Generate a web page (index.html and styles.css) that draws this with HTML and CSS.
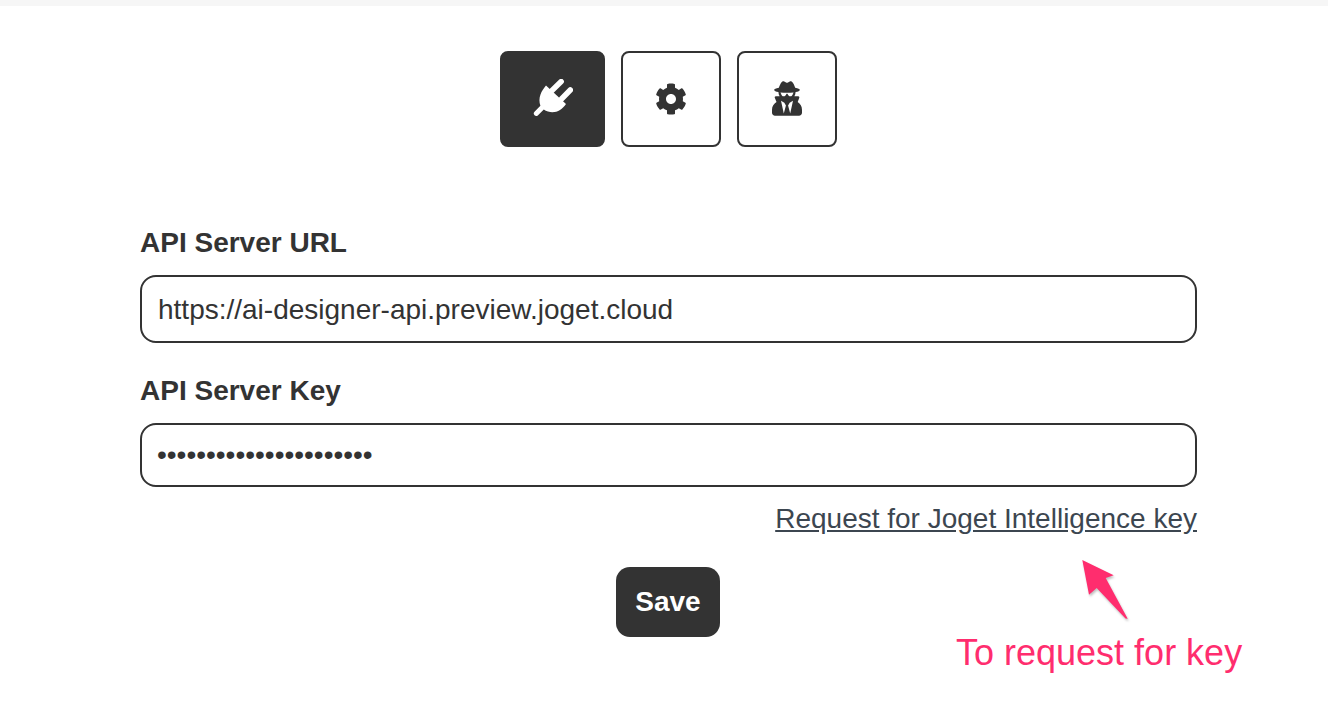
FILE: index.html
```html
<!DOCTYPE html>
<html lang="en">
<head>
<meta charset="utf-8">
<title>API Server Settings</title>
<link rel="stylesheet" href="styles.css">
</head>
<body>
<div class="top-strip"></div>
<main class="panel">
  <nav class="tabs">
    <button class="tab tab-wide tab-active" type="button" aria-label="Connection">
      <svg class="icon-plug" viewBox="0 0 40 40"><path fill="currentColor" d="M13 6.500L33 25C29 31 22 35 15 32.500C13.500 32 12 31.300 10.800 30.400L4.800 36.400A2.500 2.500 0 0 1 1.300 32.900L7.400 26.800C6 23 6.200 19 7.500 15.500C8.500 12 11 9 13 6.500Z"/><path class="plug-prong" d="M19 11.500L28.200 2.600M28.500 20L37.300 11"/></svg>
    </button>
    <button class="tab" type="button" aria-label="Settings">
      <svg class="icon-cog" viewBox="0 0 512 512"><path fill="currentColor" d="M487.4 315.7l-42.6-24.6c4.300-23.200 4.300-47 0-70.200l42.600-24.600c4.900-2.800 7.100-8.600 5.500-14-11.100-35.600-30-67.800-54.700-94.600-3.800-4.100-10-5.100-14.800-2.300L380.800 110c-17.900-15.400-38.500-27.300-60.800-35.100V25.800c0-5.600-3.900-10.500-9.400-11.700-36.700-8.200-74.300-7.800-109.200 0-5.500 1.200-9.400 6.100-9.400 11.700V75c-22.200 7.900-42.800 19.800-60.800 35.100L88.700 85.500c-4.900-2.800-11-1.900-14.800 2.300-24.700 26.700-43.600 58.900-54.700 94.600-1.700 5.400.6 11.200 5.500 14L67.300 221c-4.300 23.200-4.300 47 0 70.200l-42.600 24.600c-4.900 2.800-7.100 8.600-5.500 14 11.100 35.600 30 67.800 54.700 94.600 3.800 4.100 10 5.100 14.800 2.300l42.600-24.600c17.900 15.400 38.500 27.300 60.800 35.100v49.200c0 5.600 3.900 10.500 9.400 11.700 36.700 8.200 74.300 7.800 109.200 0 5.500-1.200 9.400-6.100 9.400-11.700v-49.200c22.200-7.900 42.800-19.800 60.800-35.100l42.600 24.600c4.900 2.800 11 1.900 14.800-2.300 24.700-26.700 43.600-58.900 54.700-94.600 1.500-5.500-.7-11.300-5.600-14.100zM256 336c-44.100 0-80-35.900-80-80s35.900-80 80-80 80 35.900 80 80-35.900 80-80 80z"/></svg>
    </button>
    <button class="tab" type="button" aria-label="Privacy">
      <svg class="icon-secret" viewBox="0 0 448 512"><path fill="currentColor" d="M383.900 308.300l23.900-62.600c4-10.500-3.700-21.700-15-21.700h-58.500c11-18.900 17.800-40.600 17.800-64v-.3c39.200-7.800 64-19.100 64-31.700 0-13.300-27.300-25.100-70.100-33-9.200-32.800-27-65.800-40.600-82.800-9.500-11.900-25.900-15.600-39.500-8.800l-27.600 13.800c-9 4.500-19.600 4.500-28.600 0L182.100 3.400c-13.600-6.800-30-3.100-39.500 8.800-13.500 17-31.400 50-40.600 82.800-42.700 7.900-70 19.700-70 33 0 12.600 24.800 23.900 64 31.700v.3c0 23.400 6.800 45.100 17.800 64H56.300c-11.500 0-19.200 11.700-14.700 22.300l25.800 60.200C27.300 329.800 0 372.700 0 422.400v44.800C0 491.900 20.100 512 44.800 512h358.400c24.700 0 44.800-20.100 44.800-44.800v-44.800c0-48.400-25.800-90.400-64.100-114.100zM176 480l-41.600-192 49.600 32 24 40-32 120zm96 0l-32-120 24-40 49.600-32L272 480zm41.700-298.500c-3.900 11.900-7 24.600-16.500 33.400-10.100 9.300-48 22.400-64-25-2.800-8.400-15.400-8.400-18.300 0-17 50.200-56 32.400-64 25-9.500-8.800-12.700-21.500-16.500-33.400-.8-2.500-6.300-5.700-6.300-5.800v-10.800c28.300 3.600 61 5.800 96 5.800s67.700-2.100 96-5.800v10.800c-.1.100-5.600 3.200-6.400 5.800z"/></svg>
    </button>
  </nav>
  <form class="form">
    <label class="label label-url" for="url">API Server URL</label>
    <input class="field field-url" id="url" type="text" value="https://ai-designer-api.preview.joget.cloud">
    <label class="label label-key" for="key">API Server Key</label>
    <input class="field field-key" id="key" type="password" value="abcdefghijklmnopqrstuv">
    <div class="link-row"><a class="key-link" href="#">Request for Joget Intelligence key</a></div>
    <div class="actions"><button class="save" type="button">Save</button></div>
  </form>
</main>
<svg class="callout-arrow" viewBox="0 0 60 70"><polygon fill="#ff2d6e" points="2.300,2 33.700,17.300 25.700,20 47.700,60.700 45.500,60.500 16.700,30 9,36.700"/></svg>
<div class="callout-text">To request for key</div>
</body>
</html>
```

FILE: styles.css
```css
* { box-sizing: border-box; }
html, body { margin: 0; padding: 0; }
body {
  position: relative;
  height: 718px;
  overflow: hidden;
  background: #fff;
  color: #333;
  font-family: "Liberation Sans", Arial, sans-serif;
}
.top-strip { height: 6px; background: #f6f6f6; }
.panel { padding: 45px 131px 0 140px; }
.tabs { display: flex; justify-content: center; gap: 16px; }
.tab {
  display: flex;
  align-items: center;
  justify-content: center;
  width: 100px;
  height: 96px;
  padding: 0;
  border: 2px solid #333;
  border-radius: 8px;
  background: #fff;
  color: #333;
}
.tab-wide { width: 105px; }
.tab-active { background: #333; color: #fff; }
.icon-plug { width: 40px; height: 40px; }
.plug-prong { fill: none; stroke: currentColor; stroke-width: 5.500; stroke-linecap: round; }
.icon-cog { width: 32px; height: 32px; }
.icon-secret { width: 30px; height: 35px; margin-top: -1px; margin-right: 1px; }
.form { display: flex; flex-direction: column; margin-top: 80px; }
.label { font-size: 28px; font-weight: 700; line-height: 32px; color: #333; }
.label-url { margin-bottom: 16px; }
.label-key { margin-top: 32px; margin-bottom: 16px; }
.field {
  display: block;
  width: 100%;
  padding: 0 16px;
  border: 2px solid #333;
  border-radius: 16px;
  background: #fff;
  color: #333;
  font-family: "Liberation Sans", Arial, sans-serif;
  font-size: 28px;
  outline: none;
}
.field-url { height: 68px; padding-top: 1px; }
.field-key { height: 64px; padding-left: 15px; padding-bottom: 1px; }
.link-row { display: flex; justify-content: flex-end; margin-top: 17px; }
.key-link { color: #3c4650; font-size: 28px; line-height: 30px; text-decoration: underline; }
.actions { display: flex; justify-content: center; margin-top: 33px; margin-right: 1px; }
.save {
  width: 104px;
  height: 70px;
  padding: 0;
  border: 0;
  border-radius: 14px;
  background: #333;
  color: #fff;
  font-family: "Liberation Sans", Arial, sans-serif;
  font-size: 28px;
  font-weight: 700;
}
.callout-arrow {
  position: absolute;
  left: 1080px;
  top: 558px;
  width: 60px;
  height: 70px;
  filter: drop-shadow(1px 2px 1px rgba(0,0,0,.25));
}
.callout-text {
  position: absolute;
  left: 956px;
  top: 632px;
  color: #ff2d6e;
  font-size: 36px;
  line-height: 42px;
  white-space: nowrap;
}
```
